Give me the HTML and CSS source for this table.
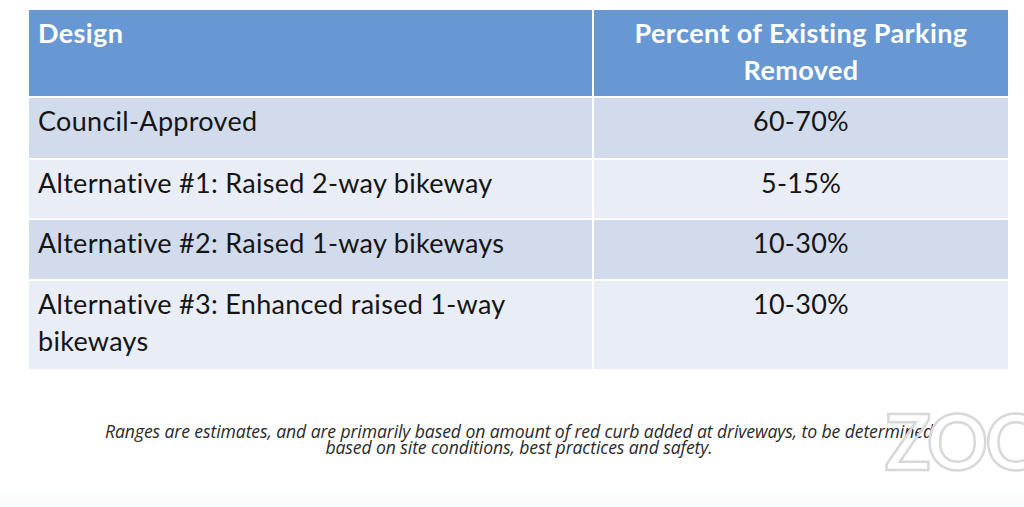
FILE: index.html
```html
<!DOCTYPE html>
<html>
<head>
<meta charset="utf-8">
<link rel="stylesheet" href="styles.css">
</head>
<body>
<div class="slide">
  <div class="table">
    <div class="cell head left">Design</div>
    <div class="cell head center">Percent of Existing Parking Removed</div>
    <div class="cell odd left">Council-Approved</div>
    <div class="cell odd center">60-70%</div>
    <div class="cell even left">Alternative #1: Raised 2-way bikeway</div>
    <div class="cell even center">5-15%</div>
    <div class="cell odd left">Alternative #2: Raised 1-way bikeways</div>
    <div class="cell odd center">10-30%</div>
    <div class="cell even left tall">Alternative #3: Enhanced raised 1-way bikeways</div>
    <div class="cell even center tall">10-30%</div>
  </div>
  <p class="note">Ranges are estimates, and are primarily based on amount of red curb added at driveways, to be determined<br>based on site conditions, best practices and safety.</p>
  <svg class="zoom" width="150" height="70" viewBox="0 0 150 70">
    <text x="0" y="62" class="zoom-text">ZOOM</text>
  </svg>
</div>
</body>
</html>
```
FILE: styles.css
```css
html, body {
  margin: 0;
  padding: 0;
}
body {
  width: 1024px;
  height: 507px;
  overflow: hidden;
  background: linear-gradient(to bottom, #ffffff 0, #ffffff 485px, #f9fcfc 507px);
  font-family: "Lato", "Liberation Sans", sans-serif;
}
.slide {
  position: relative;
  height: 507px;
  padding: 10px 0 0 29px;
  box-sizing: border-box;
}
.table {
  display: grid;
  grid-template-columns: 563px 414px;
  grid-template-rows: 86px 60px 58px 59px 88px;
  column-gap: 2px;
  row-gap: 2px;
  width: 979px;
}
.cell {
  font-size: 27px;
  letter-spacing: 0.3px;
  line-height: 37px;
  color: #151515;
  padding: 4px 10px 0 9px;
  box-sizing: border-box;
}
.left { text-align: left; }
.center { text-align: center; padding-left: 20px; padding-right: 20px; }
.head {
  background: #6798d3;
  color: #ffffff;
  font-weight: bold;
  letter-spacing: 0.4px;
}
.head.center { padding-left: 30px; padding-right: 30px; }
.odd { background: #d1dbec; }
.even { background: #e9edf6; }
.note {
  margin: 54px 0 0 -29px;
  width: 1038px;
  text-align: center;
  font-family: "Open Sans", "Liberation Sans", sans-serif;
  font-style: italic;
  font-size: 17.6px;
  line-height: 16px;
  letter-spacing: -0.1px;
  color: #2a2a2a;
}
.zoom {
  position: absolute;
  left: 885px;
  top: 408px;
}
.zoom-text {
  font-family: "Lato", "Liberation Sans", sans-serif;
  font-size: 76px;
  font-weight: bold;
  fill: none;
  stroke: #d8d8d8;
  stroke-width: 2.5;
  letter-spacing: -3px;
}
```
